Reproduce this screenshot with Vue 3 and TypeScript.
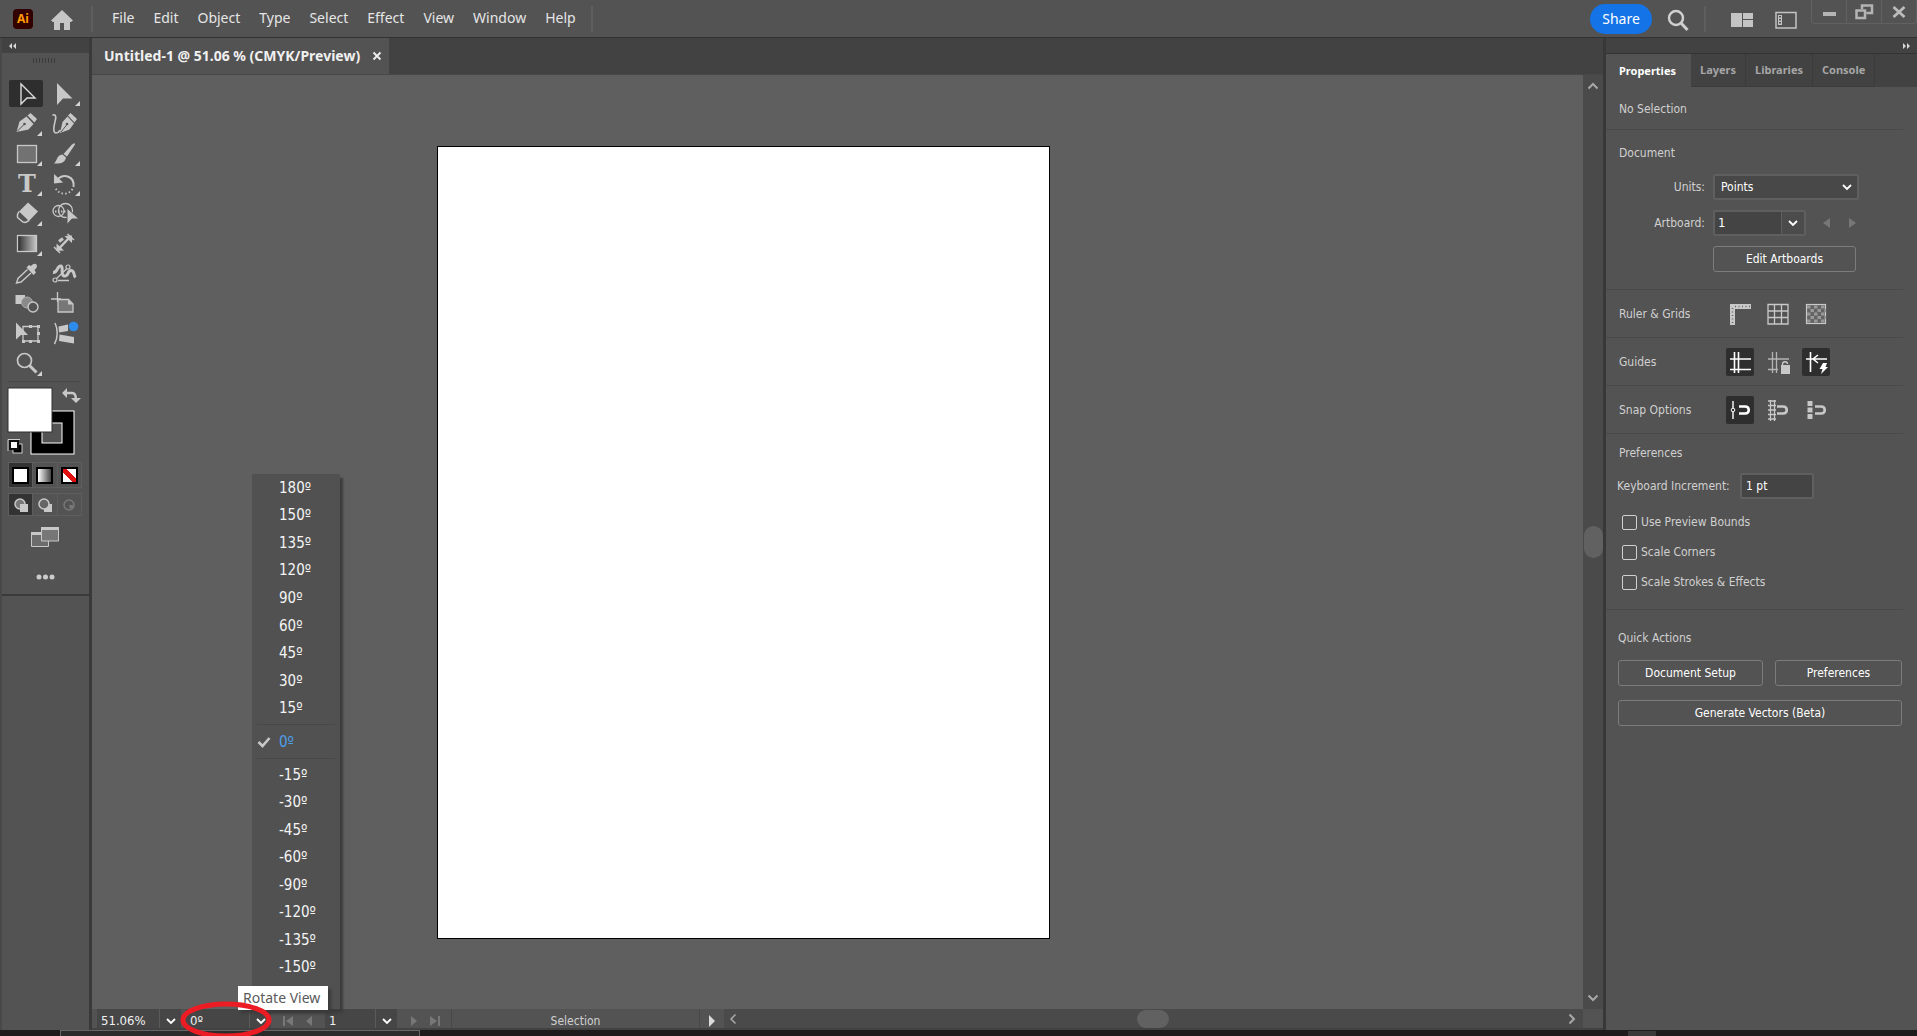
<script setup lang="ts">
import { ref } from 'vue'

interface Tool {
  name: string
  art: string
  flyout?: boolean
}

const menus = ['File', 'Edit', 'Object', 'Type', 'Select', 'Effect', 'View', 'Window', 'Help']
const tabs = ['Properties', 'Layers', 'Libraries', 'Console']

const C = '#c8c8c8'
const tools: Tool[] = [
  { name: 'Selection', art: `<path d="M12 4V24L18 18H26Z" fill="none" stroke="#dcdcdc" stroke-width="1.4"/>` },
  { name: 'Direct Selection', flyout: true, art: `<path d="M10 3V25L16 18.500H25.500Z" fill="${C}"/>` },
  { name: 'Pen', flyout: true, art: `<path d="M7.500 22 10.500 11.500 17.500 6.500 24.500 14 19.500 19.500Z M18.500 5.500 21.500 3 28 9 25.500 12.500Z" fill="${C}"/><path d="M8 21.500 15 14.500" stroke="#535353"/><circle cx="15.500" cy="14" r="1.300" fill="#535353"/>` },
  { name: 'Curvature', art: `<path d="M13 23 15.500 12 20.500 6.500 27 13.500 22.500 19.500Z M21 5.500 23.500 3 30 9 27.500 12.500Z" fill="${C}"/><path d="M14 22 20 14.500" stroke="#535353"/><circle cx="20" cy="14" r="1.300" fill="#535353"/><path d="M5.500 5.500c2-2 4 0 3 4s-3.500 13.500.500 13.500c2 0 3-1 4.500-3" fill="none" stroke="${C}" stroke-width="1.600"/>` },
  { name: 'Rectangle', flyout: true, art: `<rect x="8.500" y="5.500" width="19" height="17" fill="#727272" stroke="${C}" stroke-width="1.300"/>` },
  { name: 'Paintbrush', flyout: true, art: `<path d="M27.500 3 28 4.500 20 16.500 16.500 14 25 4.500Z M15.500 14.500 19 17.500C18 23 13 24 7 23.500 10 21.500 9.500 15 15.500 14.500Z" fill="${C}"/>` },
  { name: 'Type', flyout: true, art: `<text x="18" y="22" text-anchor="middle" font-family="DejaVu Serif, serif" font-weight="700" font-size="24" fill="${C}">T</text>` },
  { name: 'Rotate', flyout: true, art: `<path d="M10 10C17 2 28 7 26.500 17" fill="none" stroke="${C}" stroke-width="2"/><path d="M7 4V13.500L16 12.500Z" fill="${C}"/><path d="M25.500 19C22 25 12 26 8 17" fill="none" stroke="${C}" stroke-width="1.800" stroke-dasharray="1.500 2.200"/>` },
  { name: 'Eraser', flyout: true, art: `<path d="M19 2.500 29 11.500 20 21 10 11.500Z" fill="${C}"/><path d="M10 11.500 8.500 14.500V17.500L14 22 16.500 22.500 20 20.500" fill="none" stroke="${C}" stroke-width="1.500"/>` },
  { name: 'Shape Builder', art: `<circle cx="11.500" cy="11" r="5.500" fill="none" stroke="${C}" stroke-width="1.300"/><circle cx="18.500" cy="10.500" r="7" fill="none" stroke="${C}" stroke-width="1.300"/><path d="M8 11.500H22" stroke="${C}" stroke-width="1.800" stroke-dasharray="1.500 1.500"/><path d="M20 8V24.500L25 19H32Z" fill="${C}" stroke="#535353"/>` },
  { name: 'Gradient', flyout: true, art: `<defs><linearGradient id="tg"><stop stop-color="#2c2c2c"/><stop offset="1" stop-color="#c8c8c8"/></linearGradient></defs><rect x="8.500" y="5.500" width="19" height="16" fill="url(#tg)" stroke="${C}" stroke-width="1.300"/>` },
  { name: 'Dimension', art: `<path d="M20.500 4 27 10M7 17 13 23" stroke="${C}" stroke-width="1.500"/><path d="M12 18.500 22 8" stroke="${C}" stroke-width="2.500"/><path d="M25 5.500V13L17.500 6ZM9.500 21V13.500L17 20.500Z" fill="${C}"/><path d="M12 11.500 16 8.500" stroke="${C}" stroke-width="3"/>` },
  { name: 'Eyedropper', art: `<path d="M27.500 4.500C26 3 24 4 22 6L20 5 17.500 7.500 24.500 15 27 12.500 25.500 10C28 8 28.500 6 27.500 4.500Z" fill="${C}"/><path d="M18.500 9.500 9 18.500 7.500 23 12 22 22 13" fill="none" stroke="${C}" stroke-width="1.400"/>` },
  { name: 'Puppet Warp', art: `<path d="M6 12.500C11 13 10 5 14 6 17 7 13 15 17 16 22 17 20 10.500 24 10.500 28 10.500 26 15 28.500 17.500" fill="none" stroke="${C}" stroke-width="3"/><path d="M8 20 21 7.500M11 20.500H22" stroke="${C}" stroke-width="1.300"/><g fill="#535353" stroke="${C}" stroke-width="1.200"><circle cx="21" cy="7" r="2"/><circle cx="8" cy="20" r="2"/></g>` },
  { name: 'Blend', art: `<path d="M6.500 5H16V14H6.500Z" fill="${C}"/><circle cx="18" cy="12.500" r="5.500" fill="#8a8a8a" stroke="#aaa"/><circle cx="24" cy="17" r="5" fill="#535353" stroke="${C}" stroke-width="1.400"/>` },
  { name: 'Artboard', art: `<path d="M4 9H14M10.500 2V12" stroke="${C}" stroke-width="1.300"/><path d="M11 9.500H21.500L26 14V22H11Z" fill="#777" stroke="${C}" stroke-width="1.300"/><path d="M21 9.500V14.500H26Z" fill="${C}"/>` },
  { name: 'Free Transform', art: `<path d="M7 2.500V19.500L12 15H19Z" fill="${C}"/><path d="M14 6.500H29V21H14Z" fill="none" stroke="${C}" stroke-width="1.300"/><path d="M20 5h3v3h-3zM28 5h3v3h-3zM28 12h3v3h-3zM28 20h3v3h-3zM20 20h3v3h-3zM13 20h3v3h-3z" fill="${C}"/>` },
  { name: 'Width', art: `<path d="M8 3C11 9 11 18 7.500 24" fill="none" stroke="${C}" stroke-width="1.500"/><path d="M11.500 6.500 21 4.500V11L12 12.500ZM12.500 14.500 27 17V23.500L12 21Z" fill="${C}"/><circle cx="26.500" cy="6.500" r="4.800" fill="#2d8ceb"/>` },
  { name: 'Zoom', flyout: true, art: `<circle cx="15.500" cy="10.500" r="7" fill="none" stroke="${C}" stroke-width="1.700"/><path d="M20.500 15.500 27.500 22.500" stroke="${C}" stroke-width="3"/>` },
]

const W = '#ffffff'
const optionRows = [
  { label: 'Ruler & Grids', items: [
    { name: 'Show Rulers', on: false, art: `<path d="M4 4H25V9H9V25H4Z" fill="${C}"/><path d="M9 6.500H25M6.500 8V25" stroke="#666" stroke-dasharray="1 2.500" stroke-width="1.500"/>` },
    { name: 'Show Grid', on: false, art: `<path d="M4 4.500H24V24H4ZM4 11H24M4 17.500H24M10.500 4V24M17.500 4V24" fill="none" stroke="${C}" stroke-width="1.300"/>` },
    { name: 'Transparency Grid', on: false, art: `<rect x="4.500" y="4.500" width="19" height="19" fill="#646464" stroke="${C}" stroke-width="1.200"/><path d="M5 7H24M5 14H24M5 21H24" stroke="#999" stroke-width="3" stroke-dasharray="3.500 3.500"/><path d="M8.500 10.500H24M8.500 17.500H24" stroke="#999" stroke-width="3" stroke-dasharray="3.500 3.500"/>` },
  ] },
  { label: 'Guides', items: [
    { name: 'Show Guides', on: true, art: `<path d="M4 11H25M4 21.500H25M8.500 4V25M12.500 4V25" stroke="${W}" stroke-width="1.600"/>` },
    { name: 'Lock Guides', on: false, art: `<path d="M4 11H25M4 21.500H14M8.500 4V25M12.500 4V25" stroke="#b4b4b4" stroke-width="1.300"/><path d="M17 17H26V26H17Z" fill="${C}"/><path d="M18.500 17.500V16C18.500 13 23.500 13 23.500 16" fill="none" stroke="${C}" stroke-width="1.400"/>` },
    { name: 'Smart Guides', on: true, art: `<path d="M4 11H25M8.500 4V24M16 7 11 11 16 15" fill="none" stroke="${W}" stroke-width="1.600"/><path d="M21 15H25L23.500 19H26L19 26 20.500 21H17.500Z" fill="${W}"/>` },
  ] },
  { label: 'Snap Options', items: [
    { name: 'Snap to Point', on: true, art: `<path d="M7 5V23" stroke="${W}" stroke-width="1.400"/><circle cx="7" cy="14" r="1.800" fill="#2e2e2e" stroke="${W}"/><path d="M13 10.500H19C24 10.500 24 17.500 19 17.500H13" fill="none" stroke="${W}" stroke-width="2.600"/>` },
    { name: 'Snap to Grid', on: false, art: `<path d="M6.500 4V25M10.500 4V25M4 5H12M4 9.500H12M4 14H12M4 18.500H12M4 23H12" stroke="${C}" stroke-width="1.300"/><path d="M13 10.500H19C24 10.500 24 17.500 19 17.500H13" fill="none" stroke="${C}" stroke-width="2.600"/>` },
    { name: 'Snap to Pixel', on: false, art: `<path d="M5.500 5H10.500V10H5.500ZM5.500 11.500H10.500V16.500H5.500ZM5.500 18H10.500V23H5.500Z" fill="${C}"/><path d="M13 10.500H19C24 10.500 24 17.500 19 17.500H13" fill="none" stroke="${C}" stroke-width="2.600"/>` },
  ] },
]

const positive = [180, 150, 135, 120, 90, 60, 45, 30, 15]
const negative = [-15, -30, -45, -60, -90, -120, -135, -150]
const angle = ref(0)
const zoomLevel = ref('51.06%')
const artboard = ref('1')
const increment = ref('1 pt')
const prefs = ref([
  { label: 'Use Preview Bounds', on: false },
  { label: 'Scale Corners', on: false },
  { label: 'Scale Strokes & Effects', on: false },
])
</script>

<template>
  <div class="app">
    <header class="topbar">
      <span class="logo">Ai</span>
      <button class="home" aria-label="Home">
        <svg width="24" height="22"><path d="M12 1 23 11.500 21 13H20V21H14V14H10V21H4V13H3L1 11.500Z" fill="#c6c6c6" /></svg>
      </button>
      <i class="rule"></i>
      <nav class="menus"><button v-for="m in menus" :key="m">{{ m }}</button></nav>
      <i class="rule"></i>
      <span class="grow"></span>
      <button class="share">Share</button>
      <button class="search" aria-label="Search">
        <svg width="24" height="24"><circle cx="10" cy="10" r="7" fill="none" stroke="#cfcfcf" stroke-width="2.500" /><path d="M15 15 21.500 22" stroke="#cfcfcf" stroke-width="3" /></svg>
      </button>
      <i class="rule"></i>
      <div class="layouts">
        <button aria-label="Arrange documents">
          <svg width="22" height="16"><path d="M0 1H11V15H0ZM12 1H22V7H12ZM12 8H22V15H12Z" fill="#c4c4c4" /></svg>
        </button>
        <button aria-label="Switch workspace">
          <svg width="22" height="18"><path d="M1 1.500H21V17H1Z" fill="none" stroke="#c4c4c4" stroke-width="1.500" /><path d="M3 4H7V14H3Z" fill="#c4c4c4" /><path d="M5 5V13" stroke="#535353" stroke-dasharray="1.500 1.500" stroke-width="2" /></svg>
        </button>
      </div>
      <div class="winbtns">
        <button aria-label="Minimize"><svg width="18" height="18"><path d="M3 9H16V13H3Z" fill="#b4b4b4" /></svg></button>
        <button aria-label="Restore"><svg width="20" height="18"><path d="M2.500 7.500H11V15H2.500ZM8 6V2.500H18V10H12.500" fill="none" stroke="#b4b4b4" stroke-width="2.500" /></svg></button>
        <button aria-label="Close"><svg width="16" height="18"><path d="M2.500 4 13.500 14M13.500 4 2.500 14" stroke="#bcbcbc" stroke-width="2.800" /></svg></button>
      </div>
    </header>

    <main class="body">
      <aside class="toolbar">
        <div class="collapse"><svg width="8" height="6"><path d="M3 0 0 3 3 6V3ZM7 0 4 3 7 6Z" fill="#d8d8d8" /></svg></div>
        <div class="grip"></div>
        <div class="tools">
          <button v-for="(t, i) in tools" :key="t.name" :aria-label="t.name" :class="{ on: i === 0 }">
            <svg width="34" height="27">
              <g v-html="t.art"></g>
              <path v-if="t.flyout" d="M33 21V26H28Z" fill="#d4d4d4" />
            </svg>
          </button>
        </div>
        <div class="paint">
          <svg width="74" height="70" role="img" aria-label="Fill and stroke">
            <rect x="23" y="23" width="43" height="43" fill="#000" stroke="#fff" />
            <rect x="34" y="35" width="20" height="20" fill="#535353" stroke="#fff" />
            <rect x="0" y="0" width="44" height="44" fill="#fff" stroke="#303030" />
            <path d="M58 5H64Q68 5 68 12" fill="none" stroke="#c8c8c8" stroke-width="2.500" />
            <path d="M59 0V10L54 5ZM63 10H73L68 15Z" fill="#c8c8c8" />
            <rect x="5" y="56" width="9" height="9" fill="#000" stroke="#ccc" />
            <rect x="2" y="53" width="8" height="8" fill="#fff" stroke="#111" stroke-width="2" />
            <path d="M0 63V51.500H12" fill="none" stroke="#ccc" />
          </svg>
        </div>
        <div class="trio colors">
          <button class="on" aria-label="Color"><i class="chip solid"></i></button>
          <button aria-label="Gradient"><i class="chip grad"></i></button>
          <button aria-label="None"><i class="chip none"></i></button>
        </div>
        <div class="trio modes">
          <button class="on" aria-label="Draw normal"><svg width="16" height="16"><circle cx="7" cy="7" r="5" fill="#777" stroke="#c8c8c8" stroke-width="1.500" /><path d="M7 7H15V15H7Z" fill="#c8c8c8" /></svg></button>
          <button aria-label="Draw behind"><svg width="16" height="16"><path d="M7 7H15V15H7Z" fill="#c8c8c8" /><circle cx="7" cy="7" r="5" fill="#666" stroke="#c8c8c8" stroke-width="1.500" /></svg></button>
          <button aria-label="Draw inside"><svg width="16" height="16"><circle cx="8" cy="8" r="5" fill="none" stroke="#777" stroke-width="1.500" /><path d="M8 8H12V11L9 12Z" fill="#777" /></svg></button>
        </div>
        <button class="screen" aria-label="Screen mode">
          <svg width="28" height="22"><path d="M.5 6.500H17.500V20.500H.5Z" fill="#6c6c6c" stroke="#c8c8c8" /><path d="M0 6H18V9H0Z" fill="#c8c8c8" /><path d="M10.500 1.500H27.500V15H10.500Z" fill="#777" stroke="#c8c8c8" /><path d="M10 1H28V4H10Z" fill="#c8c8c8" /></svg>
        </button>
        <button class="more" aria-label="Edit toolbar">
          <svg width="20" height="6"><circle cx="3" cy="3" r="2.500" fill="#ccc" /><circle cx="9.500" cy="3" r="2.500" fill="#ccc" /><circle cx="16" cy="3" r="2.500" fill="#ccc" /></svg>
        </button>
      </aside>

      <section class="document">
        <div class="doctabs">
          <div class="doctab"><span>Untitled-1 @ 51.06 % (CMYK/Preview)</span>
            <button aria-label="Close document"><svg width="10" height="10"><path d="M1.500 1.500 8.500 8.500M8.500 1.500 1.500 8.500" stroke="#f0f0f0" stroke-width="1.800" /></svg></button>
          </div>
        </div>
        <div class="view">
          <div class="canvas"><div class="artboard"></div></div>
          <div class="vscroll">
            <svg width="12" height="8"><path d="M1.500 6.500 6 2 10.500 6.500" fill="none" stroke="#a8a8a8" stroke-width="2" /></svg>
            <i></i>
            <svg width="12" height="8"><path d="M1.500 1.500 6 6 10.500 1.500" fill="none" stroke="#a8a8a8" stroke-width="2" /></svg>
          </div>
        </div>
        <div class="status">
          <div class="combo zoom"><input v-model="zoomLevel" aria-label="Zoom" /><button aria-label="Zoom levels"><svg width="10" height="7"><path d="M1 1 5 5 9 1" fill="none" stroke="#fff" stroke-width="1.800" /></svg></button></div>
          <div class="combo rotate"><input :value="angle + 'º'" aria-label="Rotate view" /><button aria-label="Rotation angles"><svg width="10" height="7"><path d="M1 1 5 5 9 1" fill="none" stroke="#fff" stroke-width="1.800" /></svg></button></div>
          <div class="steps">
            <button aria-label="First"><svg width="12" height="12"><path d="M1 1H3V11H1ZM11 1V11L4 6Z" fill="#777" /></svg></button>
            <button aria-label="Previous"><svg width="12" height="12"><path d="M9 1V11L3 6Z" fill="#777" /></svg></button>
          </div>
          <div class="combo board"><input v-model="artboard" aria-label="Artboard number" /><button aria-label="Artboards"><svg width="10" height="7"><path d="M1 1 5 5 9 1" fill="none" stroke="#fff" stroke-width="1.800" /></svg></button></div>
          <div class="steps">
            <button aria-label="Next"><svg width="12" height="12"><path d="M3 1V11L9 6Z" fill="#777" /></svg></button>
            <button aria-label="Last"><svg width="12" height="12"><path d="M1 1V11L8 6ZM9 1H11V11H9Z" fill="#777" /></svg></button>
          </div>
          <div class="current">Selection</div>
          <button class="play" aria-label="Status options"><svg width="8" height="12"><path d="M1 0V12L7 6Z" fill="#dcdcdc" /></svg></button>
          <div class="hscroll">
            <svg width="8" height="12"><path d="M6.500 1.500 2 6 6.500 10.500" fill="none" stroke="#a8a8a8" stroke-width="1.500" /></svg>
            <i></i>
            <svg width="8" height="12"><path d="M1.500 1.500 6 6 1.500 10.500" fill="none" stroke="#a8a8a8" stroke-width="2" /></svg>
          </div>
          <div class="corner"></div>
        </div>

        <div class="popup" role="menu">
          <div class="group"><button v-for="a in positive" :key="a" role="menuitem" @click="angle = a">{{ a }}º</button></div>
          <button class="picked" role="menuitem"><svg width="14" height="12"><path d="M1.500 6 5.500 10 12.500 2" fill="none" stroke="#c8c8c8" stroke-width="2.600" /></svg>0º</button>
          <div class="group last"><button v-for="a in negative" :key="a" role="menuitem" @click="angle = a">{{ a }}º</button></div>
        </div>
        <div class="tip" role="tooltip">Rotate View</div>
        <svg class="ring" width="92" height="36"><ellipse cx="46" cy="18" rx="43" ry="16" fill="none" stroke="#ec1c24" stroke-width="5" /></svg>
      </section>

      <aside class="panel">
        <div class="collapse right"><svg width="8" height="6"><path d="M0 0 3 3 0 6ZM4 0 7 3 4 6Z" fill="#d8d8d8" /></svg></div>
        <nav class="tabs"><button v-for="(t, i) in tabs" :key="t" :class="{ on: i === 0 }">{{ t }}</button></nav>
        <div class="sec none-sel">No Selection</div>
        <div class="sec doc">
          <h2>Document</h2>
          <div class="field"><label for="units">Units:</label>
            <div class="select"><select id="units"><option>Points</option></select><svg width="10" height="7"><path d="M1 1 5 5 9 1" fill="none" stroke="#fff" stroke-width="1.800" /></svg></div>
          </div>
          <div class="field"><label for="ab">Artboard:</label>
            <div class="spin"><input id="ab" v-model="artboard" /><button aria-label="Choose artboard"><svg width="10" height="7"><path d="M1 1 5 5 9 1" fill="none" stroke="#fff" stroke-width="1.800" /></svg></button></div>
            <div class="arrows">
              <button aria-label="Previous artboard"><svg width="8" height="12"><path d="M7 1V11L0 6Z" fill="#777" /></svg></button>
              <button aria-label="Next artboard"><svg width="8" height="12"><path d="M1 1V11L8 6Z" fill="#777" /></svg></button>
            </div>
          </div>
          <button class="btn edit">Edit Artboards</button>
        </div>
        <div v-for="r in optionRows" :key="r.label" class="sec opts">
          <span>{{ r.label }}</span>
          <button v-for="it in r.items" :key="it.name" :aria-label="it.name" :class="{ on: it.on }"><svg width="28" height="28" v-html="it.art"></svg></button>
        </div>
        <div class="sec prefs">
          <h2>Preferences</h2>
          <div class="key"><label for="inc">Keyboard Increment:</label><input id="inc" v-model="increment" /></div>
          <label v-for="p in prefs" :key="p.label" class="check"><input v-model="p.on" type="checkbox" />{{ p.label }}</label>
        </div>
        <div class="quick">
          <h2>Quick Actions</h2>
          <div class="pair"><button class="btn wide">Document Setup</button><button class="btn">Preferences</button></div>
          <button class="btn">Generate Vectors (Beta)</button>
        </div>
      </aside>
    </main>
    <footer class="taskbar"><i class="preview"></i><i class="task"></i></footer>
  </div>
</template>

<style>
body { margin: 0; overflow: hidden; background: #535353; }
</style>

<style scoped>
* { box-sizing: border-box; }
button, input, select { font: inherit; color: inherit; background: none; border: 0; padding: 0; margin: 0; border-radius: 0; outline: none; }
button { display: flex; align-items: center; justify-content: center; white-space: nowrap; }
svg { display: block; flex: none; overflow: visible; }
.app { height: 100vh; display: flex; flex-direction: column; background: #535353; color: #d0d0d0; font: 12px/16px "DejaVu Sans Condensed", "Noto Sans", sans-serif; }

.topbar { height: 38px; flex: none; display: flex; align-items: center; border-bottom: 1px solid #323232; padding-left: 13px; }
.logo { width: 20px; height: 20px; border-radius: 4px; background: #330000; color: #ff9a00; font: 700 12px/20px "Noto Sans", sans-serif; text-align: center; }
.home { margin: 2px 17px 0 17px; }
.rule { width: 2px; height: 26px; background: #5e5e5e; }
.menus { display: flex; gap: 19px; margin: 0 15px 0 19px; padding-bottom: 2px; color: #e6e6e6; font: 14px/20px "Noto Sans", sans-serif; }
.grow { flex: 1; }
.share { width: 62px; height: 30px; border-radius: 15px; background: #1473e6; color: #fff; font: 14px/20px "Noto Sans", sans-serif; }
.search { margin: 3px 14px 0 14px; }
.layouts { display: flex; align-items: center; gap: 22px; margin: 3px 14px 0 25px; }
.winbtns { display: flex; align-self: flex-start; height: 24px; width: 106px; border: 1px solid #616161; border-top: 0; border-radius: 0 0 4px 4px; }
.winbtns button { flex: 1; border-left: 1px solid #616161; }
.winbtns button:first-child { border-left: 0; }

.body { flex: 1; min-height: 0; display: flex; }
.toolbar { width: 92px; flex: none; border-left: 2px solid #484848; border-right: 3px solid #3a3a3a; }
.collapse { height: 15px; background: #424242; display: flex; align-items: center; padding-left: 7px; }
.grip { width: 24px; height: 5px; margin: 5px auto 0 31px; background: repeating-linear-gradient(90deg, #3a3a3a 0 1px, #535353 1px 3px); }
.tools { display: grid; grid-template-columns: 34px 34px; gap: 3px 4px; padding: 17px 0 3px 7px; }
.tools .on { background: #2e2e2e; border-radius: 2px; }
.paint { margin: 1px 8px 0 6px; border-top: 1px solid #484848; padding-top: 6px; }
.trio { display: flex; width: 74px; margin-left: 6px; border: 1px solid #5e5e5e; }
.trio button { flex: 1; height: 24px; border-left: 1px solid #5e5e5e; }
.trio button:first-child { border-left: 0; }
.trio .on { background: #333; }
.colors { margin-top: 4px; }
.modes { margin-top: 5px; }
.modes button { height: 21px; }
.chip { width: 17px; height: 17px; border: 2px solid #000; background: #fff; }
.grad { background: linear-gradient(90deg, #fff, #444); }
.none { background: linear-gradient(135deg, #fff 38%, #e01010 38% 62%, #fff 62%); transform: scaleX(-1); }
.screen { margin: 10px 0 0 29px; }
.more { width: 87px; height: 48px; padding-top: 12px; border-bottom: 2px solid #3a3a3a; }

.document { flex: 1; min-width: 0; display: flex; flex-direction: column; position: relative; }
.doctabs { height: 37px; background: #424242; border-bottom: 1px solid #474747; display: flex; flex: none; }
.doctab { display: flex; align-items: center; gap: 12px; padding: 0 7px 0 12px; background: #535353; color: #f0f0f0; font: 700 14px/18px "Noto Sans", sans-serif; }
.view { flex: 1; min-height: 0; display: flex; }
.canvas { flex: 1; background: #5f5f5f; padding: 71px 0 0 345px; overflow: hidden; }
.artboard { width: 613px; height: 793px; background: #fff; border: 1px solid #000; }
.vscroll { width: 20px; background: #4a4a4a; display: flex; flex-direction: column; align-items: center; justify-content: space-between; padding: 7px 0; }
.vscroll i { width: 19px; height: 32px; border-radius: 10px; background: #616161; }
.status { height: 21px; flex: none; display: flex; padding-left: 5px; border-bottom: 2px solid #424242; color: #f0f0f0; }
.combo { display: flex; background: #464646; }
.combo input { min-width: 0; width: 0; flex: 1; padding: 4px 0 0 4px; font-size: 13px; }
.combo button { width: 22px; padding-top: 6px; border-left: 1px solid #5a5a5a; }
.zoom { width: 84px; }
.rotate { width: 85px; margin-left: 5px; }
.steps { width: 54px; padding-top: 4px; display: flex; justify-content: center; gap: 9px; }
.board { width: 72px; }
.current { width: 249px; padding-top: 4px; border: solid #484848; border-width: 0 1px; text-align: center; color: #d0d0d0; }
.play { width: 24px; padding-top: 4px; }
.hscroll { flex: 1; background: #4a4a4a; display: flex; align-items: center; justify-content: space-between; padding: 0 7px 0 5px; }
.hscroll i { width: 32px; height: 18px; border-radius: 9px; background: #616161; }
.corner { width: 20px; }

.popup { position: absolute; left: 160px; bottom: 21px; width: 88px; background: #515151; box-shadow: 3px 4px 2px #3c3c3c; color: #f4f4f4; font-size: 15px; }
.group { height: 248px; display: flex; flex-direction: column; }
.group button { flex: 1; justify-content: flex-start; padding-left: 27px; }
.last { padding-bottom: 28px; }
.picked { width: 78px; height: 35px; margin: 2px 5px; justify-content: flex-start; gap: 8px; color: #4f9ee8; border: solid #474747; border-width: 1px 0; }
.tip { position: absolute; left: 146px; bottom: 20px; padding: 2px 8px 2px 5px; background: #fff; color: #5a5a5a; font: 14px/20px "Noto Sans", sans-serif; box-shadow: 3px 3px 3px #3a3a3a; }
.ring { position: absolute; left: 88px; bottom: -8px; z-index: 2; }

.panel { width: 314px; flex: none; border-left: 3px solid #383838; }
.collapse.right { justify-content: flex-end; padding-right: 6px; }
.tabs { height: 34px; display: flex; background: #424242; border-top: 1px solid #333; color: #a6a6a6; font: 700 11px/16px "Noto Sans", sans-serif; }
.tabs button { padding: 0 9px; border: solid #3b3b3b; border-width: 0 1px 1px 0; }
.tabs .on { background: #535353; color: #fff; padding: 0 15px 0 13px; border: 0; }
.sec { margin-right: 14px; padding-left: 13px; border-bottom: 1px solid #494949; }
h2 { margin: 0; font: inherit; }
.none-sel { height: 43px; padding-top: 14px; }
.doc { height: 160px; padding-top: 15px; }
.field { height: 26px; display: flex; align-items: center; margin-top: 10px; }
.doc h2 + .field { margin-top: 13px; }
.field label { width: 86px; margin-right: 8px; text-align: right; }
.select { width: 146px; height: 26px; border: 2px solid #5f5f5f; border-radius: 2px; background: #484848; color: #fff; display: flex; align-items: center; padding-right: 5px; }
.select select { appearance: none; flex: 1; height: 100%; padding-left: 6px; }
.spin { display: flex; width: 93px; height: 26px; border: 2px solid #5f5f5f; border-radius: 2px; background: #444; color: #fff; }
.spin input { width: 0; flex: 1; padding-left: 3px; font-size: 13px; }
.spin button { width: 23px; border-left: 1px solid #5f5f5f; background: #4b4b4b; }
.arrows { display: flex; gap: 17px; margin-left: 17px; }
.btn { height: 26px; border: 1px solid #7c7c7c; border-radius: 3px; color: #fff; }
.edit { width: 143px; margin: 10px 0 0 94px; }
.opts { height: 48px; display: flex; align-items: center; }
.opts span { width: 107px; }
.opts button { width: 28px; height: 28px; margin-right: 10px; border-radius: 2px; }
.opts .on { background: #2e2e2e; }
.prefs { height: 176px; padding-top: 11px; }
.key { display: flex; align-items: center; margin: 12px 0 8px -2px; }
.key input { width: 74px; height: 26px; margin-left: auto; margin-right: 89px; border: 2px solid #5f5f5f; border-radius: 2px; background: #444; color: #fff; padding-left: 4px; }
.check { display: flex; align-items: center; height: 30px; gap: 4px; padding-left: 3px; }
.check input { appearance: none; width: 15px; height: 15px; border: 1px solid #d0d0d0; border-radius: 2px; }
.quick { display: flex; flex-direction: column; padding: 20px 15px 0 12px; gap: 14px; }
.pair { display: flex; gap: 12px; }
.pair .btn { flex: 7; }
.pair .wide { flex: 8; }

.taskbar { height: 6px; flex: none; background: #1d1b1c; display: flex; }
.preview { width: 360px; margin-left: 60px; background: #2b2b2b; border: solid #666; border-width: 1px 1px 0; }
.task { width: 28px; margin: 1px 0 0 1208px; background: #3a3a3a; }
</style>
